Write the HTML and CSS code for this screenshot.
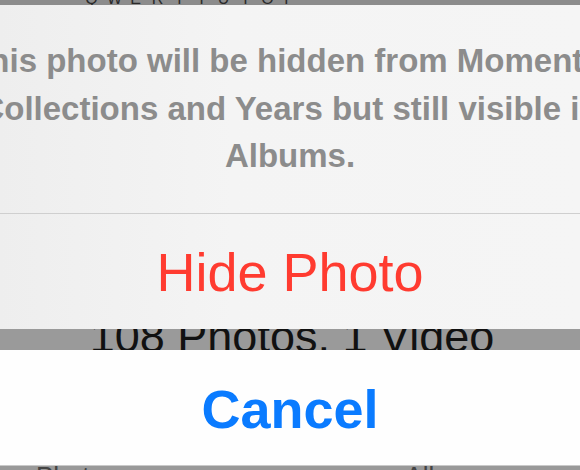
FILE: index.html
```html
<!DOCTYPE html>
<html lang="en">
<head>
<meta charset="utf-8">
<title>Hide Photo</title>
<link rel="stylesheet" href="styles.css">
</head>
<body>
<div class="screen">
  <div class="keys">
    <span>Q</span><span>W</span><span>E</span><span>R</span><span>T</span><span>Y</span><span>U</span><span>I</span><span>O</span><span>P</span>
  </div>
  <div class="sheet">
    <div class="message">
      <span class="line">This photo will be hidden from Moments,</span>
      <span class="line">Collections and Years but still visible in</span>
      <span class="line">Albums.</span>
    </div>
    <div class="action destructive">Hide Photo</div>
  </div>
  <div class="gap">
    <span class="behind">108 Photos, 1 Video</span>
  </div>
  <div class="cancel">Cancel</div>
  <div class="tabs">
    <span>Photos</span><span>Albums</span>
  </div>
</div>
</body>
</html>
```

FILE: styles.css
```css
html, body {
  margin: 0;
  padding: 0;
}

body {
  width: 580px;
  height: 470px;
  overflow: hidden;
  background: #8e8e8e;
  font-family: "Liberation Sans", Arial, sans-serif;
}

.screen {
  display: flex;
  flex-direction: column;
  width: 580px;
  height: 470px;
  overflow: hidden;
}

.keys {
  height: 5px;
  flex: 0 0 5px;
  overflow: hidden;
  background: #8c8c8c;
  display: flex;
  gap: 9px;
  padding-left: 85px;
  color: #2a2a2a;
  font-size: 16px;
  line-height: 16px;
}

.keys span {
  display: block;
  width: 13px;
  text-align: center;
  margin-top: -9px;
}

.sheet {
  flex: 0 0 324px;
  display: flex;
  flex-direction: column;
  background: linear-gradient(90deg, #eeeeee 0%, #f4f4f4 40%, #f5f5f5 100%);
}

.message {
  display: flex;
  flex-direction: column;
  align-items: center;
  height: 209px;
  padding-top: 32px;
  box-sizing: border-box;
  border-bottom: 1px solid #cfcfcf;
  color: #8c8c8c;
  font-weight: bold;
  font-size: 33px;
  line-height: 47.5px;
}

.line {
  white-space: nowrap;
}

.action {
  flex: 1;
  text-align: center;
  font-size: 54px;
  line-height: 54px;
  padding-top: 31px;
  box-sizing: border-box;
}

.destructive {
  color: #ff3b30;
}

.gap {
  flex: 0 0 21px;
  overflow: hidden;
  background: #9a9a9a;
  display: flex;
  justify-content: center;
  padding-left: 4px;
}

.behind {
  white-space: nowrap;
  color: #111;
  font-size: 45px;
  line-height: 45px;
  margin-top: -15px;
}

.cancel {
  flex: 0 0 115px;
  box-sizing: border-box;
  background: #fefefe;
  text-align: center;
  color: #0a7bff;
  font-weight: bold;
  font-size: 54px;
  line-height: 54px;
  padding-top: 32px;
}

.tabs {
  flex: 1;
  overflow: hidden;
  background: #999;
  border-top: 1px solid #c9c9c9;
  display: flex;
  justify-content: space-between;
  padding: 0 88px 0 36px;
  color: #444;
  font-size: 26px;
  line-height: 26px;
}

.tabs span {
  display: block;
  margin-top: -3px;
}
```
